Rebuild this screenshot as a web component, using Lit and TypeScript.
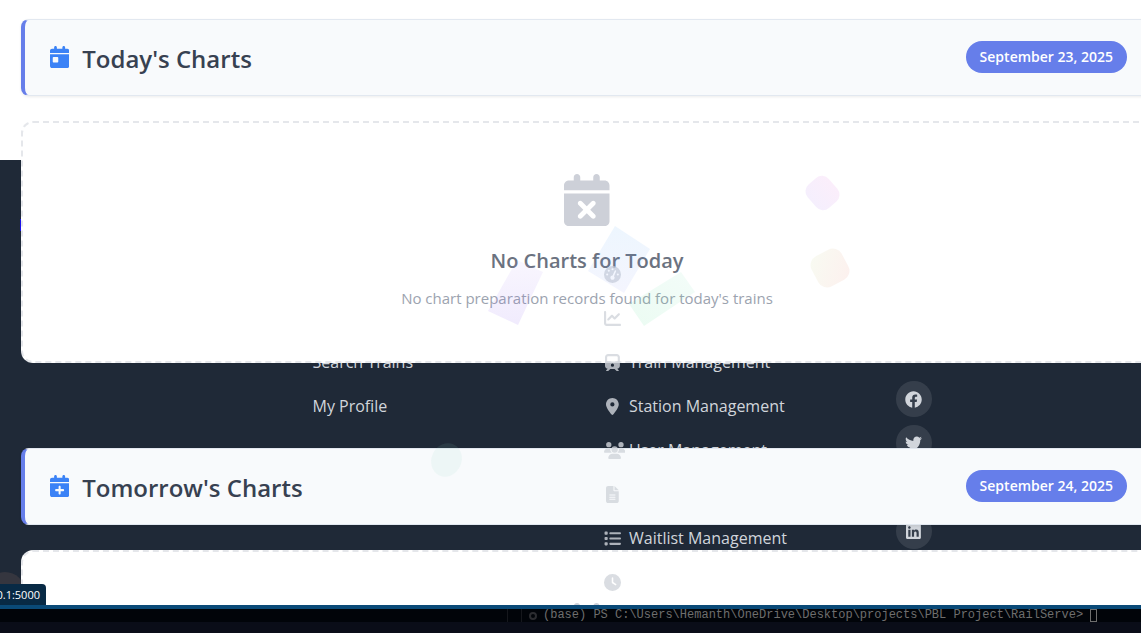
import { LitElement, html, css, svg, nothing } from "lit";
import { customElement, property } from "lit/decorators.js";

const CALENDAR =
  "M128 0c17.7 0 32 14.3 32 32V64H288V32c0-17.7 14.3-32 32-32s32 14.3 32 32V64h48c26.5 0 48 21.5 48 48v48H0V112C0 85.5 21.5 64 48 64H96V32c0-17.7 14.3-32 32-32zM0 192H448V464c0 26.5-21.5 48-48 48H48c-26.5 0-48-21.5-48-48V192z";

/* Each glyph: view box width, view box height, path data. */
const GLYPHS: Record<string, [number, number, string]> = {
  calendarDay: [448, 512, CALENDAR + "M80 256c-8.8 0-16 7.2-16 16v96c0 8.8 7.2 16 16 16h96c8.8 0 16-7.2 16-16V272c0-8.8-7.2-16-16-16H80z"],
  calendarPlus: [448, 512, CALENDAR + "M200 272v56H144c-13.3 0-24 10.7-24 24s10.7 24 24 24h56v56c0 13.3 10.7 24 24 24s24-10.7 24-24V376h56c13.3 0 24-10.7 24-24s-10.7-24-24-24H248V272c0-13.3-10.7-24-24-24s-24 10.7-24 24z"],
  calendarXmark: [448, 512, CALENDAR + "M305 305c9.4-9.4 9.4-24.6 0-33.9s-24.6-9.4-33.9 0l-47 47-47-47c-9.4-9.4-24.6-9.4-33.9 0s-9.4 24.6 0 33.9l47 47-47 47c-9.4 9.4-9.4 24.6 0 33.9s24.6 9.4 33.9 0l47-47 47 47c9.4 9.4 24.6 9.4 33.9 0s9.4-24.6 0-33.9l-47-47 47-47z"],
  gauge: [512, 512, "M0 256a256 256 0 1 1 512 0A256 256 0 1 1 0 256zM288 96a32 32 0 1 0 -64 0 32 32 0 1 0 64 0zM256 416c35.300 0 64-28.700 64-64c0-17.400-6.900-33.100-18.100-44.600L366 161.700c5.300-12.100-.200-26.300-12.300-31.600s-26.300 .200-31.600 12.300L257.900 288c-.600 0-1.300 0-1.900 0c-35.300 0-64 28.700-64 64s28.700 64 64 64zM176 144a32 32 0 1 0 -64 0 32 32 0 1 0 64 0zM96 288a32 32 0 1 0 0-64 32 32 0 1 0 0 64zm352-32a32 32 0 1 0 -64 0 32 32 0 1 0 64 0z"],
  chart: [512, 512, "M64 64c0-17.700-14.300-32-32-32S0 46.300 0 64V400c0 44.200 35.800 80 80 80H480c17.700 0 32-14.300 32-32s-14.300-32-32-32H80c-8.800 0-16-7.200-16-16V64zm406.600 86.600c12.500-12.500 12.500-32.800 0-45.300s-32.800-12.500-45.300 0L320 210.700l-57.400-57.400c-12.500-12.500-32.800-12.500-45.300 0l-112 112c-12.500 12.500-12.500 32.800 0 45.300s32.800 12.500 45.300 0L240 221.300l57.400 57.400c12.500 12.500 32.800 12.500 45.300 0l128-128z"],
  train: [448, 512, "M96 0C43 0 0 43 0 96V352c0 48 35.200 87.700 81.100 94.900l-46 46C28.100 499.900 33.100 512 43 512H82.700c8.500 0 16.600-3.400 22.600-9.400L160 448H288l54.600 54.600c6 6 14.100 9.400 22.600 9.400H405c10 0 15-12.100 7.900-19.100l-46-46c46-7.100 81.100-46.900 81.100-94.900V96c0-53-43-96-96-96H96zM64 96c0-17.700 14.300-32 32-32H352c17.700 0 32 14.300 32 32v96c0 17.700-14.300 32-32 32H96c-17.700 0-32-14.300-32-32V96zM224 288a48 48 0 1 1 0 96 48 48 0 1 1 0-96z"],
  pin: [384, 512, "M215.700 499.200C267 435 384 279.400 384 192C384 86 298 0 192 0S0 86 0 192c0 87.400 117 243 168.300 307.200c12.300 15.300 35.100 15.300 47.400 0zM192 128a64 64 0 1 1 0 128 64 64 0 1 1 0-128z"],
  users: [640, 512, "M144 0a80 80 0 1 1 0 160A80 80 0 1 1 144 0zM512 0a80 80 0 1 1 0 160A80 80 0 1 1 512 0zM0 298.700C0 239.800 47.800 192 106.700 192h42.700c15.900 0 31 3.500 44.600 9.700c-1.300 7.200-1.900 14.700-1.900 22.300c0 38.200 16.800 72.500 43.300 96H21.300C9.600 320 0 310.400 0 298.700zM404.600 320c26.600-23.500 43.300-57.800 43.300-96c0-7.600-.7-15-1.900-22.300c13.600-6.300 28.700-9.700 44.600-9.700h42.700C592.200 192 640 239.800 640 298.700c0 11.800-9.600 21.300-21.300 21.300zM224 224a96 96 0 1 1 192 0 96 96 0 1 1 -192 0zM128 485.300C128 411.700 187.700 352 261.300 352H378.700C452.300 352 512 411.700 512 485.300c0 14.700-11.900 26.700-26.700 26.700H154.700c-14.700 0-26.700-11.900-26.700-26.700z"],
  file: [384, 512, "M64 0C28.700 0 0 28.700 0 64V448c0 35.300 28.700 64 64 64H320c35.300 0 64-28.700 64-64V160H256c-17.700 0-32-14.300-32-32V0H64zM256 0V128H384L256 0zM112 256H272c8.800 0 16 7.200 16 16s-7.200 16-16 16H112c-8.800 0-16-7.200-16-16s7.200-16 16-16zm0 64H272c8.800 0 16 7.200 16 16s-7.200 16-16 16H112c-8.800 0-16-7.200-16-16s7.200-16 16-16zm0 64H272c8.800 0 16 7.200 16 16s-7.200 16-16 16H112c-8.800 0-16-7.200-16-16s7.200-16 16-16z"],
  list: [512, 512, "M40 48C26.700 48 16 58.700 16 72v48c0 13.300 10.700 24 24 24H88c13.300 0 24-10.700 24-24V72c0-13.300-10.700-24-24-24H40zM192 64c-17.700 0-32 14.300-32 32s14.300 32 32 32H480c17.700 0 32-14.300 32-32s-14.300-32-32-32H192zm0 160c-17.700 0-32 14.300-32 32s14.300 32 32 32H480c17.700 0 32-14.300 32-32s-14.300-32-32-32H192zm0 160c-17.700 0-32 14.300-32 32s14.300 32 32 32H480c17.700 0 32-14.300 32-32s-14.300-32-32-32H192zM16 232v48c0 13.300 10.700 24 24 24H88c13.300 0 24-10.700 24-24V232c0-13.300-10.700-24-24-24H40c-13.300 0-24 10.700-24 24zM40 368c-13.300 0-24 10.700-24 24v48c0 13.300 10.700 24 24 24H88c13.300 0 24-10.700 24-24V392c0-13.300-10.700-24-24-24H40z"],
  clock: [512, 512, "M256 0a256 256 0 1 1 0 512A256 256 0 1 1 256 0zM232 120V256c0 8 4 15.500 10.700 20l96 64c11 7.400 25.900 4.400 33.300-6.700s4.400-25.900-6.700-33.300L280 243.200V120c0-13.300-10.700-24-24-24s-24 10.700-24 24z"],
  facebook: [512, 512, "M504 256C504 119 393 8 256 8S8 119 8 256c0 123.780 90.690 226.380 209.250 245V327.690h-63V256h63v-54.640c0-62.150 37-96.480 93.670-96.480 27.140 0 55.520 4.840 55.520 4.840v61h-31.280c-30.800 0-40.410 19.120-40.410 38.730V256h68.780l-11 71.690h-57.780V501C413.310 482.380 504 379.780 504 256z"],
  twitter: [512, 512, "M459.370 151.716c.325 4.548.325 9.097.325 13.645 0 138.720-105.583 298.558-298.558 298.558-59.452 0-114.680-17.219-161.137-47.106 8.447.974 16.568 1.299 25.340 1.299 49.055 0 94.213-16.568 130.274-44.832-46.132-.975-84.792-31.188-98.112-72.772 6.498.974 12.995 1.624 19.818 1.624 9.421 0 18.843-1.300 27.614-3.573-48.081-9.747-84.143-51.980-84.143-102.985v-1.299c13.969 7.797 30.214 12.670 47.431 13.319-28.264-18.843-46.781-51.005-46.781-87.391 0-19.492 5.197-37.360 14.294-52.954 51.655 63.675 129.300 105.258 216.365 109.807-1.624-7.797-2.599-15.918-2.599-24.040 0-57.828 46.782-104.934 104.934-104.934 30.213 0 57.502 12.670 76.670 33.137 23.715-4.548 46.456-13.320 66.599-25.340-7.798 24.366-24.366 44.833-46.132 57.827 21.117-2.273 41.584-8.122 60.426-16.243-14.292 20.791-32.161 39.308-52.628 54.253z"],
  instagram: [448, 512, "M120 32H328A120 120 0 0 1 448 152V360A120 120 0 0 1 328 480H120A120 120 0 0 1 0 360V152A120 120 0 0 1 120 32zM120 72A80 80 0 0 0 40 152V360A80 80 0 0 0 120 440H328A80 80 0 0 0 408 360V152A80 80 0 0 0 328 72zM224 141a115 115 0 1 1 0 230 115 115 0 1 1 0-230zM224 181a75 75 0 1 0 0 150 75 75 0 1 0 0-150z"],
  linkedin: [448, 512, "M416 32H31.900C14.300 32 0 46.500 0 64.300v383.400C0 465.500 14.300 480 31.900 480H416c17.600 0 32-14.500 32-32.300V64.300c0-17.800-14.400-32.300-32-32.300zM135.400 416H69V202.200h66.500V416zm-33.200-243c-21.300 0-38.500-17.300-38.500-38.500S80.900 96 102.200 96c21.200 0 38.500 17.300 38.500 38.500 0 21.300-17.200 38.500-38.500 38.500zm282.100 243h-66.400V312c0-24.800-.5-56.700-34.500-56.700-34.600 0-39.900 27-39.900 54.900V416h-66.400V202.200h63.700v29.200h.9c8.900-16.800 30.600-34.500 62.900-34.500 67.200 0 79.700 44.300 79.700 101.900V416z"],
};

const glyph = (name: string, cls: string) => {
  const [w, h, d] = GLYPHS[name];
  return html`<svg class=${cls} viewBox="0 0 ${w} ${h}" aria-hidden="true">
    ${svg`<path fill="currentColor" fill-rule="evenodd" d=${d} />`}
  </svg>`;
};

interface FooterLink {
  icon: string;
  name: string;
  label?: string;
}

const ADMIN_LINKS: FooterLink[] = [
  { icon: "gauge", name: "Dashboard" },
  { icon: "chart", name: "Analytics" },
  { icon: "train", name: "Train Management", label: "Train Management" },
  { icon: "pin", name: "Station Management", label: "Station Management" },
  { icon: "users", name: "User Management", label: "User Management" },
  { icon: "file", name: "Reports" },
  { icon: "list", name: "Waitlist Management", label: "Waitlist Management" },
  { icon: "clock", name: "Schedule" },
];

const SOCIAL = ["facebook", "twitter", "instagram", "linkedin"];

@customElement("chart-section")
export class ChartSection extends LitElement {
  @property() heading = "";
  @property() date = "";
  @property() icon = "";
  @property() emptyTitle = "";
  @property() emptyText = "";

  static styles = css`
    :host {
      display: block;
    }
    .header {
      display: flex;
      align-items: center;
      justify-content: space-between;
      box-sizing: border-box;
      min-height: 77px;
      padding: 0 25px;
      border: 1px solid #e2e8f0;
      border-left: 4px solid #667eea;
      border-radius: 8px;
      background: #f8fafc;
      box-shadow: 0 1px 3px rgba(0, 0, 0, 0.08);
    }
    .title {
      display: flex;
      align-items: center;
      gap: 13px;
      margin: 0;
      padding-top: 2px;
      color: #374151;
      font-size: 24px;
      font-weight: 600;
      line-height: 32px;
    }
    .title-icon {
      height: 22px;
      margin-bottom: 4px;
      color: #3b82f6;
    }
    .date {
      margin-bottom: 2px;
      padding: 0 14px;
      border-radius: 20px;
      background: #667eea;
      color: #fff;
      font-size: 14px;
      font-weight: 600;
      line-height: 32px;
      white-space: nowrap;
    }
    .empty {
      display: flex;
      flex-direction: column;
      align-items: center;
      box-sizing: border-box;
      margin-top: 25px;
      padding: 51px 24px;
      border: 2px dashed #e5e7eb;
      border-radius: 12px;
      background: #fff;
      text-align: center;
    }
    .empty-icon {
      height: 52px;
      color: #cdd0d8;
    }
    .empty-title {
      margin: 21px 0 0;
      color: #6b7280;
      font-size: 20px;
      font-weight: 600;
      line-height: 28px;
    }
    .empty-text {
      margin: 11px 0 0;
      color: #9ca3af;
      font-size: 15px;
      line-height: 24px;
    }
  `;

  render() {
    return html`
      <header class="header">
        <h2 class="title">${glyph(this.icon, "title-icon")}<span>${this.heading}</span></h2>
        <span class="date">${this.date}</span>
      </header>
      <div class="empty">
        ${glyph("calendarXmark", "empty-icon")}
        <h3 class="empty-title">${this.emptyTitle}</h3>
        <p class="empty-text">${this.emptyText}</p>
      </div>
    `;
  }
}

@customElement("app-root")
export class AppRoot extends LitElement {
  static styles = css`
    :host {
      display: flex;
      flex-direction: column;
      height: 100vh;
      overflow: hidden;
      background: #fff;
      font-family: "Open Sans", "Noto Sans", sans-serif;
    }
    .page {
      position: relative;
      display: grid;
      grid-template-columns: minmax(0, 1fr);
      flex: 1;
      min-height: 0;
      overflow: hidden;
    }
    .content {
      z-index: 1;
      grid-area: 1 / 1;
      display: flex;
      flex-direction: column;
      gap: 85px;
      margin-right: -12px;
      padding: 19px 0 0 21px;
    }
    .footer {
      grid-area: 1 / 1;
      display: grid;
      grid-template-columns: repeat(4, 1fr);
      gap: 34px;
      margin: 160px -12px 0 0;
      padding: 92px 0 0 21px;
      background: #1f2937;
    }
    .links {
      display: flex;
      flex-direction: column;
      margin: 0;
      padding: 0;
      list-style: none;
    }
    .quick {
      grid-column: 2;
      padding-top: 88px;
    }
    .link {
      display: flex;
      align-items: center;
      gap: 8px;
      height: 44px;
      color: #d1d5db;
      font-size: 16px;
      text-decoration: none;
      white-space: nowrap;
    }
    .slot {
      z-index: 2;
      display: flex;
      justify-content: safe center;
      flex: none;
      width: 17px;
      opacity: 0.8;
    }
    .link-icon {
      flex: none;
      height: 17px;
    }
    .social {
      display: flex;
      flex-direction: column;
      gap: 8px;
      padding-top: 129px;
    }
    .social-link {
      display: flex;
      align-items: center;
      justify-content: center;
      width: 36px;
      height: 36px;
      border-radius: 50%;
      background: rgba(255, 255, 255, 0.1);
      color: #d1d5db;
    }
    .social-icon {
      height: 17px;
    }
    .bubble {
      position: absolute;
      left: -15px;
      bottom: -7px;
      width: 40px;
      height: 40px;
      border-radius: 50%;
      background: #35363f;
    }
    .mark {
      position: absolute;
      left: 20px;
      top: 219px;
      width: 2px;
      height: 12px;
      background: #1a12e8;
    }
    .shapes {
      position: absolute;
      left: 0;
      top: 0;
      z-index: 3;
      width: 900px;
      height: 500px;
      pointer-events: none;
    }
    .status {
      position: absolute;
      left: 0;
      bottom: 0;
      z-index: 4;
      display: flex;
      justify-content: flex-end;
      width: 40px;
      padding-right: 6px;
      border-top-right-radius: 4px;
      background: #082a45;
      color: #fff;
      font-size: 11px;
      line-height: 21px;
    }
    .terminal {
      display: flex;
      flex-direction: column;
      height: 28px;
      flex: none;
      box-sizing: border-box;
      border-top: 4px solid #0a4a78;
      background: #0a0d18;
    }
    .prompt {
      display: flex;
      align-items: center;
      height: 13px;
      padding-left: 507px;
      background: #010409;
      color: #6e6e6e;
      font-family: "Liberation Mono", monospace;
      font-size: 12px;
      line-height: 13px;
      white-space: pre;
    }
    .gutter {
      box-sizing: border-box;
      width: 15px;
      height: 13px;
      border: solid #15171c;
      border-width: 0 1px;
    }
    .dot {
      box-sizing: border-box;
      width: 8px;
      height: 8px;
      margin: 0 6px 0 7px;
      border: 2px solid #2b2c30;
      border-radius: 50%;
    }
    .cursor {
      box-sizing: border-box;
      width: 7px;
      height: 13px;
      margin-left: 7px;
      border: 1px solid #6e6e6e;
    }
  `;

  private shapes() {
    return html`<svg class="shapes" viewBox="0 0 900 500" aria-hidden="true">
      ${svg`
        <defs>
          <linearGradient id="blue" x1="0" y1="0" x2="0" y2="1"><stop offset="0" stop-color="#379bf5"/><stop offset="1" stop-color="#8791f5"/></linearGradient>
          <linearGradient id="violet" x1="0" y1="0" x2="0" y2="1"><stop offset="0" stop-color="#b99bf5"/><stop offset="1" stop-color="#5f23eb"/></linearGradient>
          <linearGradient id="green" x1="1" y1="0" x2="0" y2="1"><stop offset="0" stop-color="#7de1b9"/><stop offset="1" stop-color="#23d773"/></linearGradient>
          <linearGradient id="pink" x1="0" y1="0" x2="0" y2="1"><stop offset="0" stop-color="#fbeefb"/><stop offset="1" stop-color="#f5effd"/></linearGradient>
          <linearGradient id="peach" x1="0" y1="0" x2="1" y2="1"><stop offset="0" stop-color="#f8fbf2"/><stop offset="1" stop-color="#fdf0ee"/></linearGradient>
        </defs>
        <path d="M615 226L650 249L624 293L588 271Z" fill="url(#blue)" fill-opacity="0.09"/>
        <path d="M517 260L543 272L518 325L488 311Z" fill="url(#violet)" fill-opacity="0.09"/>
        <path d="M681 272L695 292L644 326L629 304Z" fill="url(#green)" fill-opacity="0.09"/>
        <rect x="807" y="179" width="31" height="28" rx="9" transform="rotate(49 822.5 193)" fill="url(#pink)"/>
        <rect x="813" y="251" width="34" height="34" rx="10" transform="rotate(-28 830 268)" fill="url(#peach)"/>
        <ellipse cx="446.500" cy="460" rx="15" ry="17" transform="rotate(25 446.500 460)" fill="#8fd7c8" fill-opacity="0.1"/>
      `}
    </svg>`;
  }

  render() {
    return html`
      <div class="page">
        <footer class="footer">
          <ul class="links quick">
            <li><a class="link" href="#search">Search Trains</a></li>
            <li><a class="link" href="#profile">My Profile</a></li>
          </ul>
          <ul class="links">
            ${ADMIN_LINKS.map(
              (l) => html`<li>
                <a class="link" href="#" aria-label=${l.name}>
                  <span class="slot">${glyph(l.icon, "link-icon")}</span>
                  ${l.label ? html`<span>${l.label}</span>` : nothing}
                </a>
              </li>`
            )}
          </ul>
          <nav class="social">
            ${SOCIAL.map(
              (s) => html`<a class="social-link" href="#" aria-label=${s}>${glyph(s, "social-icon")}</a>`
            )}
          </nav>
        </footer>
        <div class="bubble"></div>
        <div class="mark"></div>
        <main class="content">
          <chart-section
            heading="Today's Charts"
            date="September 23, 2025"
            icon="calendarDay"
            .emptyTitle=${"No Charts for Today"}
            .emptyText=${"No chart preparation records found for today's trains"}
          ></chart-section>
          <chart-section
            heading="Tomorrow's Charts"
            date="September 24, 2025"
            icon="calendarPlus"
          ></chart-section>
        </main>
        ${this.shapes()}
        <div class="status">0.1:5000</div>
      </div>
      <div class="terminal">
        <div class="prompt"><span class="gutter"></span><span class="dot"></span><span>(base) PS C:\\Users\\Hemanth\\OneDrive\\Desktop\\projects\\PBL Project\\RailServe&gt;</span><span class="cursor"></span></div>
      </div>
    `;
  }
}
